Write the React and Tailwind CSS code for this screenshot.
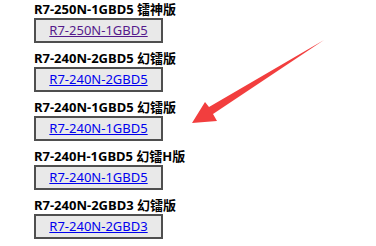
import React from "react";

const items = [
  { title: "R7-250N-1GBD5 镭神版", link: "R7-250N-1GBD5", visited: true },
  { title: "R7-240N-2GBD5 幻镭版", link: "R7-240N-2GBD5" },
  { title: "R7-240N-1GBD5 幻镭版", link: "R7-240N-1GBD5" },
  { title: "R7-240H-1GBD5 幻镭H版", link: "R7-240N-1GBD5" },
  { title: "R7-240N-2GBD3 幻镭版", link: "R7-240N-2GBD3" },
];

const Arrow = () => (
  <svg className="absolute left-0 top-0" width="376" height="246" viewBox="0 0 376 246">
    <polygon
      points="192,123 205,102 209,107 324,40 213,114 217,121"
      fill="#f23e3e"
    />
  </svg>
);

export default function App() {
  return (
    <div
      className="relative w-[376px] h-[246px] overflow-hidden bg-white pl-[34px] pt-[2px]"
      style={{ fontFamily: '"Noto Sans", "Noto Sans CJK SC", sans-serif' }}
    >
      {items.map((item, i) => (
        <div key={i} className="mb-[8px]">
          <div className="text-[13px] leading-[15px] font-bold text-black">{item.title}</div>
          <div className="mt-px w-[129px] h-[25px] border-2 border-[#4f4f4f] bg-[#e9e9e9] flex items-center justify-center">
            <a
              href="#"
              className={
                "text-[13px] leading-[15px] underline " +
                (item.visited ? "text-[#551a8b]" : "text-[#0000ee]")
              }
            >
              {item.link}
            </a>
          </div>
        </div>
      ))}
      <Arrow />
    </div>
  );
}
